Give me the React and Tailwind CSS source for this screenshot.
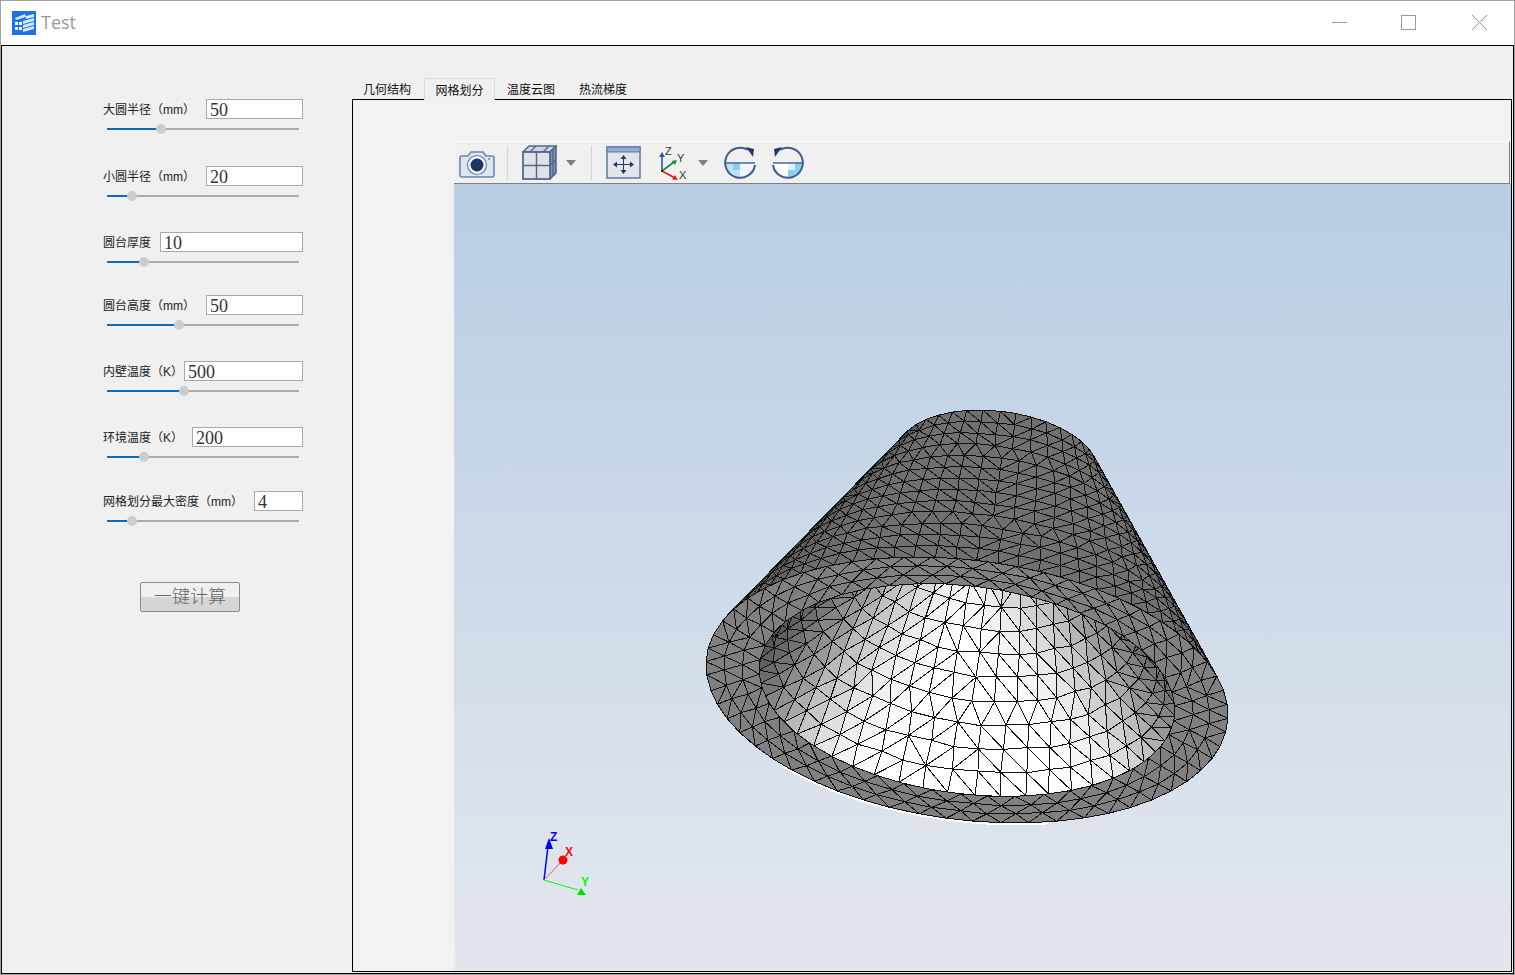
import React from 'react'

const fields = [
    { label: '大圆半径（mm）', value: '50', labelClass: 'w-[103px]', fill: 54, gapClass: 'mt-0' },
    { label: '小圆半径（mm）', value: '20', labelClass: 'w-[103px]', fill: 25, gapClass: 'mt-[32px]' },
    { label: '圆台厚度', value: '10', labelClass: 'w-[57px]', fill: 37, gapClass: 'mt-[31px]' },
    { label: '圆台高度（mm）', value: '50', labelClass: 'w-[103px]', fill: 72, gapClass: 'mt-[28px]' },
    { label: '内壁温度（K）', value: '500', labelClass: 'w-[81px]', fill: 77, gapClass: 'mt-[31px]' },
    { label: '环境温度（K）', value: '200', labelClass: 'w-[89px]', fill: 37, gapClass: 'mt-[31px]' },
    { label: '网格划分最大密度（mm）', value: '4', labelClass: 'w-[151px]', fill: 25, gapClass: 'mt-[29px]' },
]

const tabs = [
    { name: '几何结构', className: 'w-[72px] pt-[4px] pr-[2px]' },
    { name: '网格划分', className: 'w-[71px] pt-[2px] border border-b-0 border-[#d9d9d9] bg-[#f0f0f0] mb-[-1px] relative' },
    { name: '温度云图', className: 'w-[72px] pt-[4px]' },
    { name: '热流梯度', className: 'w-[72px] pt-[4px]' },
]

// page coordinates of the rings of the frustum
const outerRing = { x: 967, y: 690, X: 261, A: 25, B: 130.6 }
const innerRing = { x: 967, y: 690, X: 208, A: 20, B: 104.5 }
const topRing = { x: 998, y: 461, X: 100, A: 9.6, B: 50 }
const innerTopRing = { x: 998, y: 461, X: 55, A: 5.3, B: 27 }

// brightness of the inner wall against distance from the lit middle, [d, grey]
const holeLight = [
    [30, 255], [80, 235], [116, 200], [130, 190], [148, 155], [162, 144], [182, 119], [206, 96], [230, 70],
]

const rad = (d) => (d * Math.PI) / 180
const mix = (a, b, s) => a + (b - a) * s
const onRing = (e, t) => [
    e.x + e.X * Math.cos(rad(t)),
    e.y + e.A * Math.cos(rad(t)) + e.B * Math.sin(rad(t)),
]
const between = (e1, e2, t, s) => {
    const a = onRing(e1, t)
    const b = onRing(e2, t)
    return [mix(a[0], b[0], s), mix(a[1], b[1], s)]
}
const dist = (a, b) => Math.hypot(a[0] - b[0], a[1] - b[1])
const toPoints = (pts) => pts.map((p) => p[0].toFixed(1) + ',' + p[1].toFixed(1)).join(' ')
const grey = (v) => {
    const c = Math.round(Math.max(0, Math.min(255, v)))
    return 'rgb(' + c + ',' + c + ',' + c + ')'
}

const lightAt = (x, y) => {
    const d = Math.abs(x - 965) - (y - 670) * 0.7
    if (d <= holeLight[0][0]) return holeLight[0][1]
    for (let i = 1; i < holeLight.length; i++) {
        const [d1, g1] = holeLight[i]
        const [d0, g0] = holeLight[i - 1]
        if (d <= d1) return mix(g0, g1, (d - d0) / (d1 - d0))
    }
    return holeLight[holeLight.length - 1][1]
}

// angles where a generator of the cone touches its outline
function outline(e1, e2, from) {
    const facing = (t) => {
        const a = onRing(e1, t)
        const b = onRing(e2, t)
        const c = onRing(e1, t + 0.5)
        return (b[0] - a[0]) * (c[1] - a[1]) - (b[1] - a[1]) * (c[0] - a[0])
    }
    const roots = []
    for (let t = from; t < from + 360; t += 0.5) {
        if (facing(t) * facing(t + 0.5) <= 0) roots.push(t)
    }
    return roots
}

function makeRandom(seed) {
    let s = seed
    return () => {
        s = (s * 16807) % 2147483647
        return s / 2147483647 - 0.5
    }
}

// rows of nodes joined by triangles, always taking the shorter diagonal
function buildBand({ e1, e2, t0, t1, rows, n0, n1, seed, shade, closed }) {
    const random = makeRandom(seed)
    const nodes = []
    for (let r = 0; r <= rows; r++) {
        const n = Math.round(mix(n0, n1, r / rows))
        const step = (t1 - t0) / n
        const row = []
        const last = closed ? n : n + 1
        for (let k = 0; k <= last; k++) {
            const edge = r === 0 || r === rows
            if (closed && k === n) {
                row.push({ t: row[0].t + 360, s: row[0].s, p: row[0].p })
                continue
            }
            const raw = t0 + (k + (r % 2) * 0.5 - 0.25) * step + random() * step * 0.12
            const t = closed ? raw : Math.max(t0, Math.min(t1, raw))
            const s = (r + (edge ? 0 : random() * 0.14)) / rows
            row.push({ t, s, p: between(e1, e2, t, s) })
        }
        nodes.push(row)
    }
    const tris = []
    for (let r = 0; r < rows; r++) {
        const a = nodes[r]
        const b = nodes[r + 1]
        let i = 0
        let j = 0
        while (i < a.length - 1 || j < b.length - 1) {
            const moveA = j === b.length - 1 || (i < a.length - 1 && dist(a[i + 1].p, b[j].p) < dist(a[i].p, b[j + 1].p))
            const next = moveA ? a[i + 1] : b[j + 1]
            const tri = [a[i], b[j], next]
            tris.push({
                points: toPoints(tri.map((q) => q.p)),
                fill: shade(
                    (tri[0].t + tri[1].t + tri[2].t) / 3,
                    (tri[0].p[0] + tri[1].p[0] + tri[2].p[0]) / 3,
                    (tri[0].p[1] + tri[1].p[1] + tri[2].p[1]) / 3,
                ),
            })
            if (moveA) i++
            else j++
        }
    }
    return tris
}

const wallRoots = outline(outerRing, topRing, 90)
const wallFrom = wallRoots[0]
const wallTo = wallRoots[1]
const wallTris = buildBand({
    e1: outerRing, e2: topRing, t0: wallFrom, t1: wallTo, rows: 13, n0: 30, n1: 15, seed: 4711,
    shade: (t) => {
        const v = (t - wallFrom) / (wallTo - wallFrom)
        if (v < 0.3) return grey(112 - 42 * Math.pow(1 - v / 0.3, 2))
        if (v > 0.85) return grey(112 - 22 * ((v - 0.85) / 0.15))
        return grey(112)
    },
})

const holeRoots = outline(innerRing, innerTopRing, -90)
const holeTris = buildBand({
    e1: innerRing, e2: innerTopRing, t0: holeRoots[0], t1: holeRoots[1], rows: 13, n0: 31, n1: 20, seed: 1913,
    shade: (t, x, y) => grey(lightAt(x, y)),
})
const rimTris = buildBand({
    e1: innerRing, e2: outerRing, t0: 0, t1: 360, rows: 3, n0: 46, n1: 58, seed: 271, closed: true,
    shade: () => '#808080',
})

const ringPath = (e, t0, t1) => {
    const pts = []
    for (let t = t0; t <= t1; t += 3) pts.push(onRing(e, t))
    return toPoints(pts)
}

function Mesh() {
    return (
        <svg width="1057" height="787" viewBox="454 184 1057 787" className="block">
            <defs>
                <clipPath id="hole">
                    <polygon points={ringPath(innerRing, 0, 360)} />
                </clipPath>
            </defs>
            <g shapeRendering="crispEdges" stroke="#111" strokeWidth="1" strokeLinejoin="bevel">
                {wallTris.map((m, i) => <polygon key={'w' + i} points={m.points} fill={m.fill} />)}
                <polyline points={ringPath({ ...outerRing, y: outerRing.y + 1.5 }, 72, 136)} fill="none" stroke="#fff" strokeWidth="2" />
                <g clipPath="url(#hole)">
                    <polygon points={ringPath(innerRing, 0, 360)} fill="#555" stroke="none" />
                    {holeTris.map((m, i) => <polygon key={'h' + i} points={m.points} fill={m.fill} />)}
                </g>
                {rimTris.map((m, i) => <polygon key={'r' + i} points={m.points} fill={m.fill} />)}
            </g>
            <AxesMarker />
        </svg>
    )
}

function AxesMarker() {
    return (
        <g fontFamily="Liberation Sans, sans-serif" fontWeight="700" fontSize="12">
            <path d="M544 880 L548 846" stroke="#0000ff" strokeWidth="1.5" />
            <path d="M549 838 L553 849 L545 849 Z" fill="#0000ff" />
            <text x="550" y="841" fill="#0000ff">Z</text>
            <path d="M544 880 L562 861" stroke="#ff0000" strokeWidth="1" strokeDasharray="1.5 1" />
            <circle cx="563" cy="860" r="4.5" fill="#ff0000" />
            <text x="565" y="856" fill="#ff0000">X</text>
            <path d="M544 880 L578 890" stroke="#00ff00" strokeWidth="1" />
            <path d="M581 888 L586 895 L577 895 Z" fill="#00e000" />
            <text x="581" y="886" fill="#00ff00">Y</text>
        </g>
    )
}

function AppIcon() {
    return (
        <svg width="24" height="24" viewBox="0 0 24 24" className="flex-none">
            <rect width="24" height="24" fill="#1a73e8" />
            <path d="M3 7 L13 3 L14 6 L4 9 Z M14 5 L22 3 V6 L14 8 Z M11 10 L22 7 V10 L11 13 Z M11 14 L22 11 V14 L11 17 Z M11 18 L22 15 V18 L11 21 Z" fill="#d8e8fb" />
            <rect x="3" y="11" width="3" height="3" fill="#fff" />
            <rect x="7" y="11" width="3" height="3" fill="#fff" />
            <rect x="3" y="16" width="3" height="3" fill="#fff" />
            <rect x="7" y="16" width="3" height="3" fill="#fff" />
        </svg>
    )
}

function CameraIcon() {
    return (
        <svg width="36" height="30" viewBox="0 0 36 30" className="flex-none">
            <path d="M2 8 H9 L12 4 H24 L27 8 H33 Q35 8 35 10 V27 Q35 29 33 29 H3 Q1 29 1 27 V10 Q1 8 2 8 Z" fill="#dbe6f3" stroke="#6a86ab" strokeWidth="1.6" />
            <circle cx="18" cy="17" r="9.5" fill="#f4f7fb" stroke="#6a86ab" strokeWidth="1.2" />
            <circle cx="18" cy="17" r="6.5" fill="#1d3565" />
            <circle cx="30" cy="11" r="1" fill="#6a86ab" />
        </svg>
    )
}

function CubeIcon() {
    return (
        <svg width="35" height="35" viewBox="0 0 35 35" className="flex-none">
            <path d="M1 7 L7 1 H34 L28 7 Z" fill="#cdd6e4" stroke="#56688a" strokeWidth="1.6" />
            <path d="M28 7 L34 1 V28 L28 34 Z" fill="#7f93b3" stroke="#56688a" strokeWidth="1.6" />
            <rect x="1" y="7" width="27" height="27" fill="#dfe2e8" stroke="#56688a" strokeWidth="1.8" />
            <path d="M14.5 7 V34 M1 20.5 H28 M28 20.5 L34 14.5 M31 4 V31 M8 7 L14 1 M21 7 L27 1" stroke="#56688a" strokeWidth="1.4" fill="none" />
        </svg>
    )
}

function FitIcon() {
    return (
        <svg width="35" height="33" viewBox="0 0 35 33" className="flex-none">
            <rect x="1" y="1" width="33" height="31" fill="#e4e5ea" stroke="#5b77a2" strokeWidth="1.5" />
            <rect x="1" y="1" width="33" height="5" fill="#92abd0" stroke="#5b77a2" strokeWidth="1" />
            <path d="M17.5 10 V26 M9 18.5 H26" stroke="#1f3b66" strokeWidth="1" />
            <path d="M17.5 9 L20.5 13 H14.5 Z M17.5 28 L20.5 24 H14.5 Z M7 18.5 L11 15.5 V21.5 Z M28 18.5 L24 15.5 V21.5 Z" fill="#1f3b66" />
        </svg>
    )
}

function AxisIcon() {
    return (
        <svg width="32" height="36" viewBox="0 0 32 36" className="flex-none" fontFamily="Liberation Sans, sans-serif" fontSize="11">
            <path d="M4 26 V11" stroke="#2c55a5" strokeWidth="1.6" />
            <path d="M4 7 L7 12 H1 Z" fill="#2c55a5" />
            <path d="M4 26 L16 17" stroke="#1e8a3c" strokeWidth="1.6" />
            <path d="M19 15 L17 20 L13.5 16 Z" fill="#1e8a3c" />
            <path d="M4 26 L17 33" stroke="#e02020" strokeWidth="1.6" />
            <path d="M20 35 L14 34.5 L17 30 Z" fill="#e02020" />
            <circle cx="4" cy="26" r="1" fill="#111" />
            <text x="7" y="10" fill="#333">Z</text>
            <text x="19" y="17" fill="#333">Y</text>
            <text x="21" y="34" fill="#333">X</text>
        </svg>
    )
}

function RotateIcon({ flip }) {
    return (
        <svg width="34" height="34" viewBox="0 0 34 34" className={flip ? 'flex-none -scale-x-100' : 'flex-none'}>
            <path d="M17 17 H32 A15 15 0 0 1 17 32 Z" fill={flip ? '#ffffff' : '#eef6fc'} />
            <path d="M2 17 H17 V32 A15 15 0 0 1 2 17 Z" fill={flip ? '#8fcdf2' : '#bfe0f6'} />
            <path d="M10 17 H17 V24 H10 Z" fill={flip ? '#dff1fc' : '#8fcdf2'} />
            <path d="M2 17 H32" stroke="#3d5f88" strokeWidth="1.4" />
            <path d="M32 19 A15 15 0 1 1 25 4" fill="none" stroke="#3d5f88" strokeWidth="2" />
            <path d="M23 1 L31 3 L30 11 Z" fill="#1f3b66" />
        </svg>
    )
}

function Caret() {
    return <div className="h-0 w-0 flex-none border-x-[5px] border-t-[6px] border-x-transparent border-t-[#808080]" />
}

function Field({ field }) {
    return (
        <div className={field.gapClass}>
            <div className="flex h-[20px] items-center">
                <span className={'flex-none pt-[2px] whitespace-nowrap text-[12px] leading-[20px] text-[#222] ' + field.labelClass}>
                    {field.label}
                </span>
                <div className="h-[20px] min-w-0 flex-1 border border-[#a9a9a9] bg-white pl-[3px] font-['Liberation_Serif',serif] text-[18px] leading-[21px] text-[#333]">
                    {field.value}
                </div>
            </div>
            <div className="mt-[5px] ml-[4px] flex h-[10px] w-[192px] items-center">
                <div className="h-[2px] bg-[#0f6cbd]" style={{ width: field.fill + 'px' }} />
                <div className="z-10 -mx-[5px] h-[10px] w-[10px] flex-none rounded-full bg-[#cdcdcd]" />
                <div className="h-[2px] flex-1 bg-[#ababab]" />
            </div>
        </div>
    )
}

function App() {
    return (
        <div className="flex h-screen w-screen flex-col overflow-hidden border border-[#a3a3a3] bg-white font-['Liberation_Sans','Noto_Sans_CJK_SC',sans-serif]">
            {/* Title bar */}
            <div className="flex h-[44px] flex-none items-center bg-white pl-[11px]">
                <AppIcon />
                <span className="ml-[5px] pb-[2px] font-['Open_Sans',sans-serif] text-[18px] text-[#999]">Test</span>
                <div className="ml-auto flex items-center pr-[27px] pb-[2px]">
                    <div className="h-px w-[15px] bg-[#999]" />
                    <div className="ml-[54px] h-[15px] w-[15px] border border-[#999]" />
                    <svg width="15" height="15" viewBox="0 0 15 15" className="ml-[56px]">
                        <path d="M0 0 L15 15 M15 0 L0 15" stroke="#999" strokeWidth="1" />
                    </svg>
                </div>
            </div>

            <div className="flex min-h-0 flex-1 border border-black bg-[#f0f0f0] pr-px pb-px">
                {/* Parameter panel */}
                <div className="w-[350px] flex-none pt-[53px] pl-[101px]">
                    <div className="w-[200px]">
                        {fields.map((field) => <Field key={field.label} field={field} />)}
                    </div>
                    <button className="mt-[56px] ml-[37px] block h-[30px] w-[100px] rounded-[2px] border border-[#8a8a8a] bg-[linear-gradient(#f0f0f0_50%,#d6d6d6_50%)] text-[18px] leading-[28px] font-light text-[#666]">
                        一键计算
                    </button>
                </div>

                {/* Tabs and viewer */}
                <div className="flex min-w-0 flex-1 flex-col pt-[31px]">
                    <div className="flex h-[22px] flex-none items-end">
                        {tabs.map((tab) => (
                            <div key={tab.name} className={'flex h-[22px] flex-none items-center justify-center text-[12px] text-[#111] ' + tab.className}>
                                {tab.name}
                            </div>
                        ))}
                    </div>
                    <div className="flex min-h-0 flex-1 border border-black bg-[#f2f2f2] pl-[101px]">
                        <div className="flex min-w-0 flex-1 flex-col pt-[41px]">
                            <div className="mr-px flex h-[43px] flex-none items-center border-t border-r border-b border-t-white border-r-[#808080] border-b-[#808080] bg-[#f0f0f0] pl-[5px]">
                                <CameraIcon />
                                <div className="mr-[14px] ml-[12px] h-[34px] w-px bg-[#d4d4d4]" />
                                <CubeIcon />
                                <div className="ml-[9px]"><Caret /></div>
                                <div className="mr-[14px] ml-[15px] h-[34px] w-px bg-[#d4d4d4]" />
                                <FitIcon />
                                <div className="ml-[17px]"><AxisIcon /></div>
                                <div className="ml-[8px]"><Caret /></div>
                                <div className="ml-[15px]"><RotateIcon /></div>
                                <div className="ml-[14px]"><RotateIcon flip /></div>
                            </div>
                            <div className="min-h-0 flex-1 overflow-hidden bg-gradient-to-b from-[#b9cde5] to-[#e4e8ed]">
                                <Mesh />
                            </div>
                        </div>
                    </div>
                </div>
            </div>
        </div>
    )
}

export default App
